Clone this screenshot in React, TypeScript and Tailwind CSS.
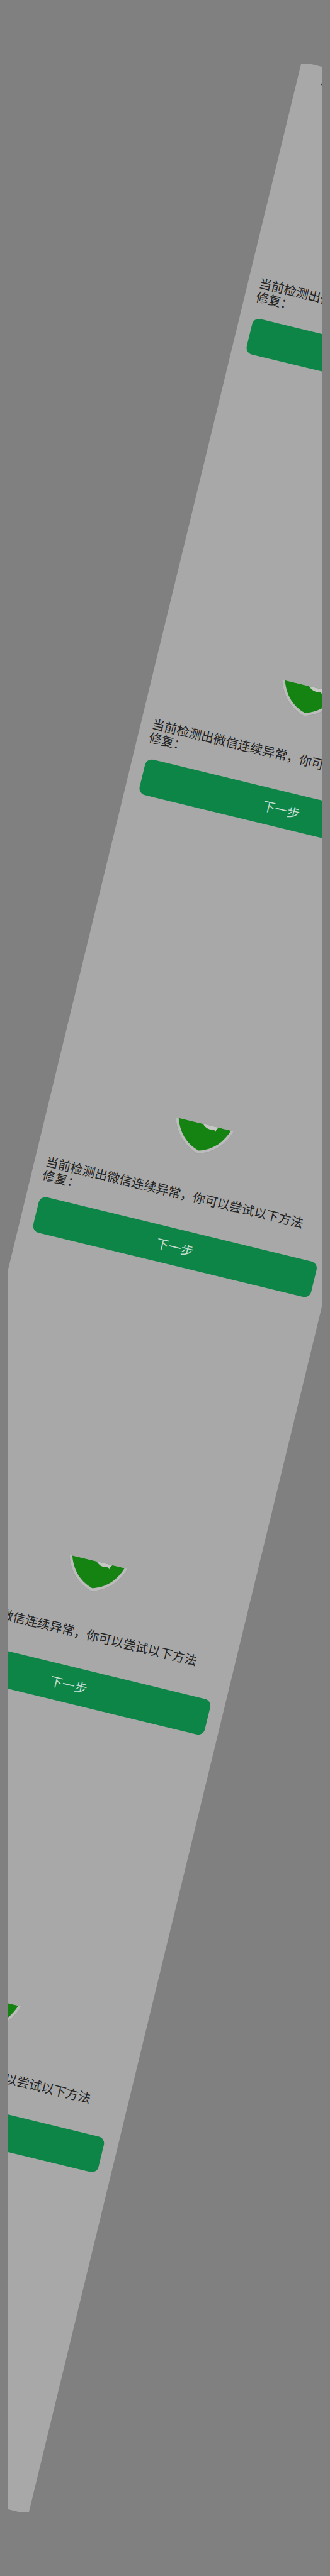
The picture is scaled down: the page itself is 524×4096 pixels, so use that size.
function Shield() {
  return (
    <svg viewBox="0 0 152 78" className="h-[49px] w-24" aria-hidden="true">
      <path d="M0 0 C11 37 35 65 76 77.5 C117 65 141 37 152 0 Z" fill="#9f9f9f" />
      <path d="M1 0 C12 36 36 64 76 76 C116 64 140 36 151 0 Z" fill="#bcbcbc" />
      <path d="M8 0 C19 33 40 58 76 68.5 C112 58 133 33 144 0 Z" fill="#158312" />
      <path d="M71 0 Q76 6 84 8.5 Q93 11 101 8 Q105 9 107 12.5 Q107 5 113 0 Z" fill="#c6c6c6" />
    </svg>
  );
}

function RepairStep() {
  return (
    <section className="flex flex-col px-[22px] pb-[486px]">
      <div className="flex justify-center">
        <Shield />
      </div>
      <p className="-ml-1 mt-14 pr-8 text-xl leading-[22px] text-[#222222]">
        当前检测出微信连续异常，你可以尝试以下方法修复：
      </p>
      <button
        type="button"
        className="mt-[23px] h-[58px] rounded-[11px] bg-[#0c8546] text-xl text-[#c4dccf]"
      >
        下一步
      </button>
    </section>
  );
}

export default function App() {
  return (
    <main
      lang="zh-CN"
      className="min-h-screen bg-[#808080] px-[13px] py-[102px] font-['Noto_Sans_CJK_SC',sans-serif]"
    >
      <div className="overflow-hidden">
        <div className="rotate-[13.64deg] bg-[#a8a8a8] pb-[66px]">
          <header className="flex h-[241px] items-start px-[38px] pt-[22px]">
            <svg viewBox="0 0 6 10" className="h-[10px] w-[6px]" aria-hidden="true">
              <path d="M5 1 L1 5 L5 9" fill="none" stroke="#333333" strokeWidth="1.5" />
            </svg>
          </header>
          <div className="pb-[5px]">
            <RepairStep />
          </div>
          <RepairStep />
          <RepairStep />
          <RepairStep />
          <RepairStep />
        </div>
      </div>
    </main>
  );
}
